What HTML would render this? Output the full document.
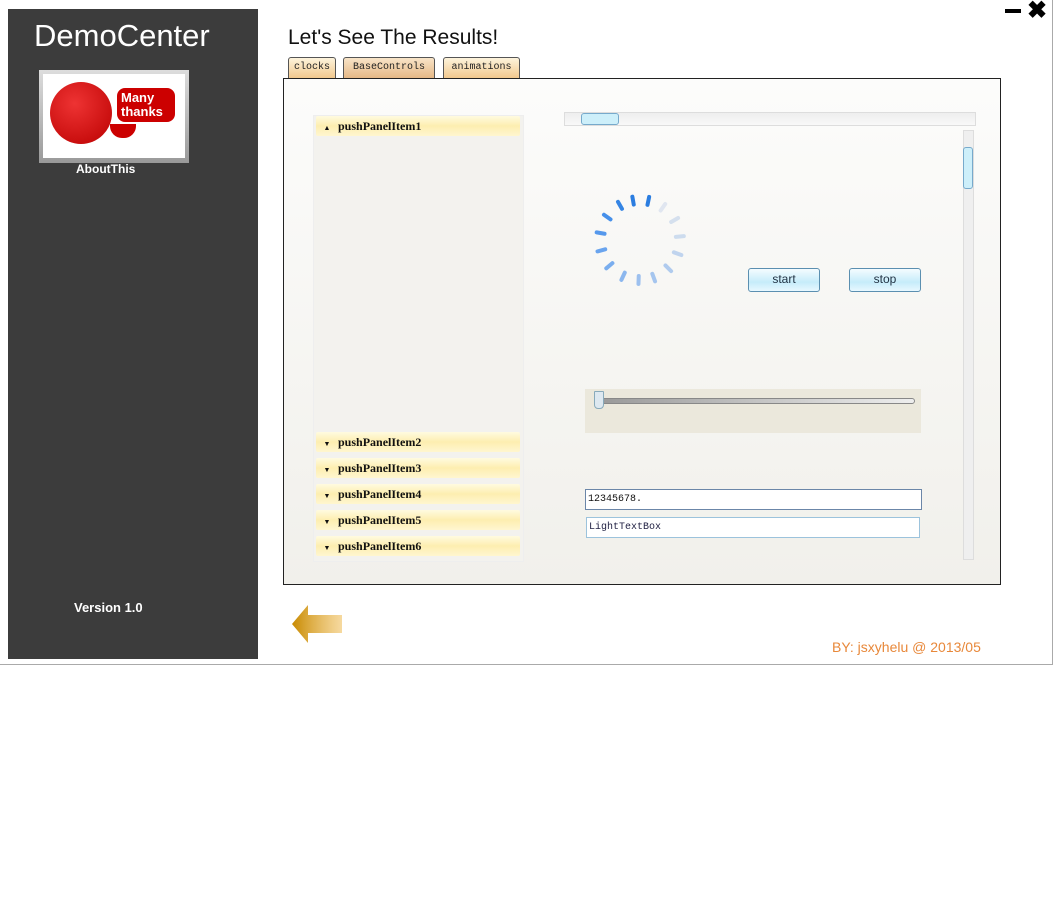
<!DOCTYPE html>
<html><head><meta charset="utf-8"><style>
body{margin:0;width:1055px;height:900px;background:#fff;position:relative;overflow:hidden;font-family:"Liberation Sans",sans-serif}
.abs{position:absolute}
.win{left:0;top:0;width:1052px;height:664px;border-right:1px solid #aaa;border-bottom:1px solid #aaa;background:#fff}
.side{left:8px;top:9px;width:250px;height:650px;background:#3c3c3c}
.tab{top:57px;height:20px;border:1px solid #555;border-bottom:none;border-radius:3px 3px 0 0;background:linear-gradient(#fdf3dc,#f2c98e);font:10px "Liberation Mono",monospace;line-height:20px;text-align:center;color:#222}
.ppi{left:316px;width:204px;height:20px;background:linear-gradient(#fffbe0,#fdeeb0 50%,#fff6d0);font:bold 12px "Liberation Serif",serif;line-height:20px;color:#111;border-radius:2px}
.ppi span{display:inline-block;width:22px;text-align:center;font-size:7px}
.btn{top:268px;width:70px;height:22px;border:1px solid #5b8fb0;border-radius:3px;background:linear-gradient(#f4fcff,#c6ecfa 60%,#e8f8ff);font-size:12px;text-align:center;line-height:20px;color:#234}
.tb{font:10px "Liberation Mono",monospace;background:#fff;padding-left:2px;box-sizing:border-box}
</style></head><body>
<div class="abs win"></div>
<div class="abs side"></div>
<div class="abs" style="left:34px;top:18px;color:#fff;font-size:31px">DemoCenter</div>
<div class="abs" style="left:39px;top:70px;width:150px;height:93px;background:linear-gradient(#ddd,#999)"></div>
<div class="abs" style="left:43px;top:74px;width:142px;height:84px;background:#fff"></div>
<div class="abs" style="left:50px;top:82px;width:62px;height:62px;border-radius:50%;background:radial-gradient(circle at 40% 35%,#e33,#b00)"></div>
<div class="abs" style="left:117px;top:88px;width:58px;height:34px;border-radius:8px;background:#c00;color:#fff;font-size:13px;font-weight:bold;line-height:14px;padding-left:4px;box-sizing:border-box;padding-top:3px">Many<br>thanks</div>
<div class="abs" style="left:110px;top:124px;width:26px;height:14px;border-radius:0 0 12px 12px;background:#c00"></div>
<div class="abs" style="left:76px;top:162px;color:#fff;font-weight:bold;font-size:12px">AboutThis</div>
<div class="abs" style="left:74px;top:600px;color:#fff;font-weight:bold;font-size:13px">Version 1.0</div>
<div class="abs" style="left:288px;top:26px;font-size:21px;color:#111">Let's See The Results!</div>
<div class="abs" style="left:1005px;top:9px;width:16px;height:4px;background:#000"></div>
<div class="abs" style="left:1027px;top:-4px;font-size:24px;font-weight:bold">✖</div>
<div class="abs tab" style="left:288px;width:46px">clocks</div>
<div class="abs tab" style="left:343px;top:57px;width:90px;background:linear-gradient(#f8e4c8,#e6b886)">BaseControls</div>
<div class="abs tab" style="left:443px;width:75px">animations</div>
<div class="abs" style="left:283px;top:78px;width:716px;height:505px;border:1px solid #222;background:linear-gradient(#fcfcfb,#f1f0eb)"></div>
<div class="abs" style="left:313px;top:115px;width:209px;height:445px;border:1px solid #eee;background:#f3f2ee"></div>
<div class="abs ppi" style="top:116px"><span>▲</span>pushPanelItem1</div>
<div class="abs ppi" style="top:432px"><span>▼</span>pushPanelItem2</div>
<div class="abs ppi" style="top:458px"><span>▼</span>pushPanelItem3</div>
<div class="abs ppi" style="top:484px"><span>▼</span>pushPanelItem4</div>
<div class="abs ppi" style="top:510px"><span>▼</span>pushPanelItem5</div>
<div class="abs ppi" style="top:536px"><span>▼</span>pushPanelItem6</div>
<div class="abs" style="left:564px;top:112px;width:410px;height:12px;border:1px solid #ddd;background:linear-gradient(#eee,#f8f8f8)"></div>
<div class="abs" style="left:581px;top:113px;width:36px;height:10px;border:1px solid #7ac;border-radius:3px;background:#cdeffa"></div>
<div class="abs" style="left:963px;top:130px;width:9px;height:428px;border:1px solid #ddd;background:#efefef"></div>
<div class="abs" style="left:963px;top:147px;width:8px;height:40px;border:1px solid #7ac;border-radius:3px;background:#cdeffa"></div>
<svg class="abs" style="left:590px;top:190px" width="100" height="100" viewBox="-50 -50 100 100">
<g stroke-linecap="round" stroke-width="4">
<line x1="0" y1="-44" x2="0" y2="-36" stroke="#2b7de0" transform="rotate(-10)"/>
<line x1="0" y1="-44" x2="0" y2="-36" stroke="#2b7de0" transform="rotate(12)"/>
<line x1="0" y1="-44" x2="0" y2="-36" stroke="#e0e6f0" transform="rotate(35)"/>
<line x1="0" y1="-44" x2="0" y2="-36" stroke="#d5e0ee" transform="rotate(60)"/>
<line x1="0" y1="-44" x2="0" y2="-36" stroke="#cddcee" transform="rotate(85)"/>
<line x1="0" y1="-44" x2="0" y2="-36" stroke="#c0d4ee" transform="rotate(110)"/>
<line x1="0" y1="-44" x2="0" y2="-36" stroke="#b0cbee" transform="rotate(135)"/>
<line x1="0" y1="-44" x2="0" y2="-36" stroke="#a5c5ee" transform="rotate(160)"/>
<line x1="0" y1="-44" x2="0" y2="-36" stroke="#9dc0ee" transform="rotate(182)"/>
<line x1="0" y1="-44" x2="0" y2="-36" stroke="#8cb7ee" transform="rotate(205)"/>
<line x1="0" y1="-44" x2="0" y2="-36" stroke="#7aaeee" transform="rotate(230)"/>
<line x1="0" y1="-44" x2="0" y2="-36" stroke="#69a4ee" transform="rotate(255)"/>
<line x1="0" y1="-44" x2="0" y2="-36" stroke="#5598ec" transform="rotate(280)"/>
<line x1="0" y1="-44" x2="0" y2="-36" stroke="#4690ea" transform="rotate(305)"/>
<line x1="0" y1="-44" x2="0" y2="-36" stroke="#3585e4" transform="rotate(330)"/>
</g></svg>
<div class="abs btn" style="left:748px">start</div>
<div class="abs btn" style="left:849px">stop</div>
<div class="abs" style="left:585px;top:389px;width:336px;height:44px;background:#ebe8dc"></div>
<div class="abs" style="left:598px;top:398px;width:315px;height:4px;border:1px solid #888;border-radius:3px;background:linear-gradient(90deg,#999,#eee)"></div>
<div class="abs" style="left:594px;top:391px;width:8px;height:16px;border:1px solid #8ab;background:#dde8f0;border-radius:1px 1px 4px 4px"></div>
<div class="abs tb" style="left:585px;top:489px;width:337px;height:21px;border:1px solid #6b86a8;line-height:19px;color:#111">12345678.</div>
<div class="abs tb" style="left:586px;top:517px;width:334px;height:21px;border:1px solid #9cc3dc;line-height:19px;color:#224">LightTextBox</div>
<svg class="abs" style="left:292px;top:603px" width="52" height="42"><defs><linearGradient id="g" x1="0" x2="1"><stop offset="0" stop-color="#c88a00"/><stop offset="1" stop-color="#f0c060" stop-opacity=".6"/></linearGradient></defs><path d="M0 21 L16 2 L16 12 L50 12 L50 30 L16 30 L16 40 Z" fill="url(#g)"/></svg>
<div class="abs" style="left:832px;top:639px;color:#e8883a;font-size:14px">BY: jsxyhelu @ 2013/05</div>
</body></html>
